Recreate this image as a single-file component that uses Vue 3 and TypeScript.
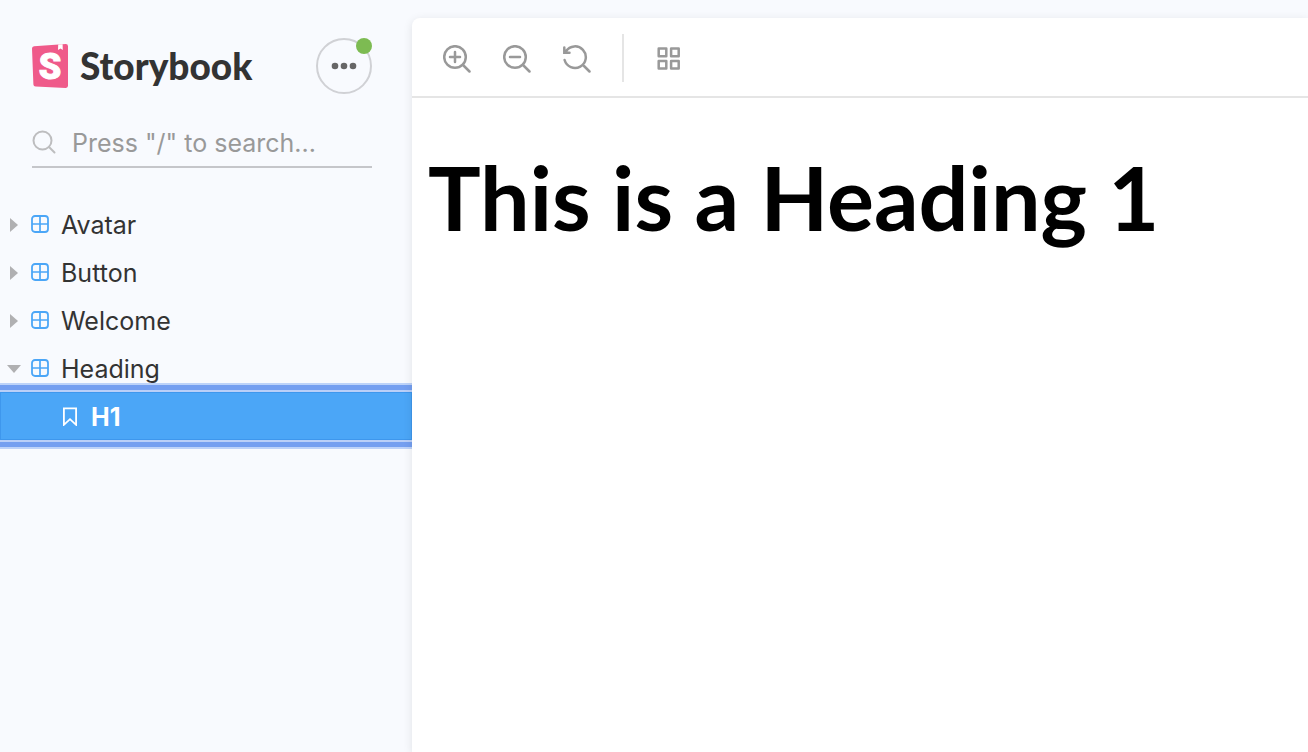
<script setup lang="ts">
import { ref } from 'vue'

interface Group {
  name: string
  open: boolean
  stories: string[]
}

const groups = ref<Group[]>([
  { name: 'Avatar', open: false, stories: [] },
  { name: 'Button', open: false, stories: [] },
  { name: 'Welcome', open: false, stories: [] },
  { name: 'Heading', open: true, stories: ['H1'] },
])
const selected = ref('H1')
const query = ref('')
</script>

<template>
  <div class="shell">
    <aside class="sidebar">
      <header class="brand">
        <a class="logo" href="#" aria-label="Storybook">
          <svg class="mark" width="36" height="44" viewBox="0 0 36 44" aria-hidden="true">
            <path fill="#ef5a8a" d="M2 2.2 33.8 0Q36 0 36 2.2V41.8Q36 44 33.7 43.9L3.6 42.6Q1.5 42.5 1.4 40.4L0 4.5Q0 2.4 2 2.2Z" />
            <path fill="#fff" d="m26.2.6 4.4-.4.2 5.8-2.3-1.6-2.5 1.6Z" />
            <text class="initial" x="18" y="35" text-anchor="middle">S</text>
          </svg>
          <span class="wordmark">Storybook</span>
        </a>
        <button class="menu" type="button" aria-label="Shortcuts">
          <svg width="26" height="8" viewBox="0 0 26 8" fill="#666" aria-hidden="true">
            <circle cx="4" cy="4" r="3.3" /><circle cx="13" cy="4" r="3.3" /><circle cx="22" cy="4" r="3.3" />
          </svg>
          <span class="dot"></span>
        </button>
      </header>

      <label class="search">
        <svg width="24" height="24" viewBox="0 0 24 24" fill="none" stroke="#bdbdbf" stroke-width="2" stroke-linecap="round" aria-hidden="true">
          <circle cx="10.5" cy="10.5" r="9" /><path d="m17 17 5.5 5.5" />
        </svg>
        <input v-model="query" type="text" placeholder='Press "/" to search...' aria-label="Search stories" />
      </label>

      <nav class="tree">
        <template v-for="group in groups" :key="group.name">
          <button class="row" type="button" :aria-expanded="group.open" @click="group.open = !group.open">
            <svg class="caret" width="16" height="16" viewBox="0 0 16 16" fill="#b0b0b2" aria-hidden="true">
              <path v-if="group.open" d="M1 5h14L8 13Z" />
              <path v-else d="M4 2v14l8-7Z" />
            </svg>
            <svg class="kind" width="18" height="18" viewBox="0 0 18 18" fill="none" stroke="#4ba6f7" aria-hidden="true">
              <rect x="1" y="1" width="16" height="16" rx="3" stroke-width="1.8" />
              <path d="M9 1v16M1 9h16" stroke-width="1.7" />
            </svg>
            <span>{{ group.name }}</span>
          </button>
          <template v-if="group.open">
            <a
              v-for="story in group.stories"
              :key="story"
              class="row story"
              :class="{ selected: story === selected }"
              href="#"
              @click.prevent="selected = story"
            >
              <svg class="bookmark" width="16" height="20" viewBox="0 0 16 20" fill="none" stroke="#fff" stroke-width="1.8" aria-hidden="true">
                <path d="M1.9 2.4h12.2v16.4L8 13.2l-6.1 5.6Z" />
              </svg>
              <span>{{ story }}</span>
            </a>
          </template>
        </template>
      </nav>
    </aside>

    <main class="preview">
      <div class="toolbar">
        <button type="button" aria-label="Zoom in">
          <svg width="28" height="28" viewBox="0 0 28 28" aria-hidden="true">
            <circle cx="12" cy="12" r="10.8" /><path d="m20 20 6.5 6.5M12 7v10M7 12h10" />
          </svg>
        </button>
        <button type="button" aria-label="Zoom out">
          <svg width="28" height="28" viewBox="0 0 28 28" aria-hidden="true">
            <circle cx="12" cy="12" r="10.8" /><path d="m20 20 6.5 6.5M7 12h10" />
          </svg>
        </button>
        <button type="button" aria-label="Reset zoom">
          <svg width="28" height="28" viewBox="0 0 28 28" aria-hidden="true">
            <path d="M3 6.2A10.8 10.8 0 1 1 1.6 15M1.3 2.6v5.1h5.2M1.6 7.4l3-3M20 20l6.5 6.5" />
          </svg>
        </button>
        <span class="divider"></span>
        <button type="button" aria-label="Change background">
          <svg width="28" height="28" viewBox="0 0 28 28" aria-hidden="true">
            <path class="tiles" d="M3.7 3.6h7.6v7.6H3.7ZM16.1 3.6h7.6v7.6h-7.6ZM3.7 16h7.6v7.6H3.7ZM16.1 16h7.6v7.6h-7.6Z" />
          </svg>
        </button>
      </div>
      <section class="canvas">
        <h1>This is a Heading 1</h1>
      </section>
    </main>
  </div>
</template>

<style>
body {
  background: #f8fafe;
}
</style>

<style scoped>
.shell {
  display: flex;
  min-height: 100vh;
  overflow: hidden;
  background: #f8fafe;
  color: #333;
  font-family: Inter, 'Liberation Sans', sans-serif;
  font-size: 25px;
}

button {
  padding: 0;
  border: 0;
  background: none;
  color: inherit;
  font: inherit;
  cursor: pointer;
}

a {
  color: inherit;
  text-decoration: none;
}

svg {
  display: block;
  flex: none;
}

.sidebar {
  flex: none;
  width: 412px;
}

.brand {
  display: flex;
  align-items: center;
  justify-content: space-between;
  padding: 38px 40px 0 32px;
}

.logo {
  display: flex;
  align-items: center;
  gap: 12px;
}

.initial {
  fill: #fff;
  stroke: #fff;
  stroke-width: 1px;
  font-family: Roboto, sans-serif;
  font-weight: 900;
  font-size: 36px;
}

.wordmark {
  font-family: Lato, 'Open Sans', sans-serif;
  font-weight: 900;
  font-size: 37px;
  line-height: 48px;
}

.menu {
  position: relative;
  display: grid;
  place-items: center;
  box-sizing: border-box;
  width: 56px;
  height: 56px;
  border: 2px solid #d0d1d5;
  border-radius: 50%;
}

.dot {
  position: absolute;
  top: -2px;
  right: -2px;
  width: 16px;
  height: 16px;
  border-radius: 50%;
  background: #7dbb52;
}

.search {
  display: flex;
  align-items: center;
  gap: 16px;
  height: 48px;
  margin: 24px 40px 0 32px;
  border-bottom: 2px solid #c5c6ca;
}

.search input {
  flex: 1;
  min-width: 0;
  padding: 2px 0 0;
  border: 0;
  outline: 0;
  background: transparent;
  color: #333;
  font: inherit;
}

.search input::placeholder {
  color: #999;
  opacity: 1;
}

.tree {
  margin-top: 32px;
}

.row {
  display: flex;
  align-items: center;
  width: 100%;
  height: 48px;
  padding-left: 6px;
  text-align: left;
}

.row span {
  padding-top: 2px;
}

.kind {
  margin: 0 12px 0 9px;
}

.story {
  box-sizing: border-box;
  gap: 13px;
  padding-left: 62px;
}

.selected {
  background: #4ba6f7;
  color: #fff;
  font-weight: 700;
  box-shadow:
    inset 0 0 0 1px #3e97ed,
    0 0 0 2px #b9cff8,
    0 0 0 7px #749ff0,
    0 0 0 9px #bdd3f9;
}

.preview {
  position: relative;
  flex: 1;
  min-width: 0;
  margin-top: 18px;
  border-top-left-radius: 8px;
  background: #fff;
  box-shadow: 0 2px 10px rgba(0, 0, 0, 0.1);
}

.toolbar {
  display: flex;
  align-items: center;
  gap: 31px;
  height: 76px;
  padding: 2px 31px 0;
  border-bottom: 2px solid #e5e5e5;
}

.toolbar button {
  padding-top: 2px;
}

.toolbar button + button {
  margin-left: 1px;
}

.toolbar svg {
  fill: none;
  stroke: #999;
  stroke-width: 2.5px;
  stroke-linecap: round;
}

.toolbar .tiles {
  stroke-linejoin: round;
}

.divider {
  width: 2px;
  height: 48px;
  background: #e5e5e5;
}

.canvas {
  padding: 44px 16px;
}

h1 {
  margin: 0;
  color: #000;
  font-family: Lato, 'Open Sans', sans-serif;
  font-weight: 700;
  font-size: 88px;
  line-height: 110px;
}
</style>
